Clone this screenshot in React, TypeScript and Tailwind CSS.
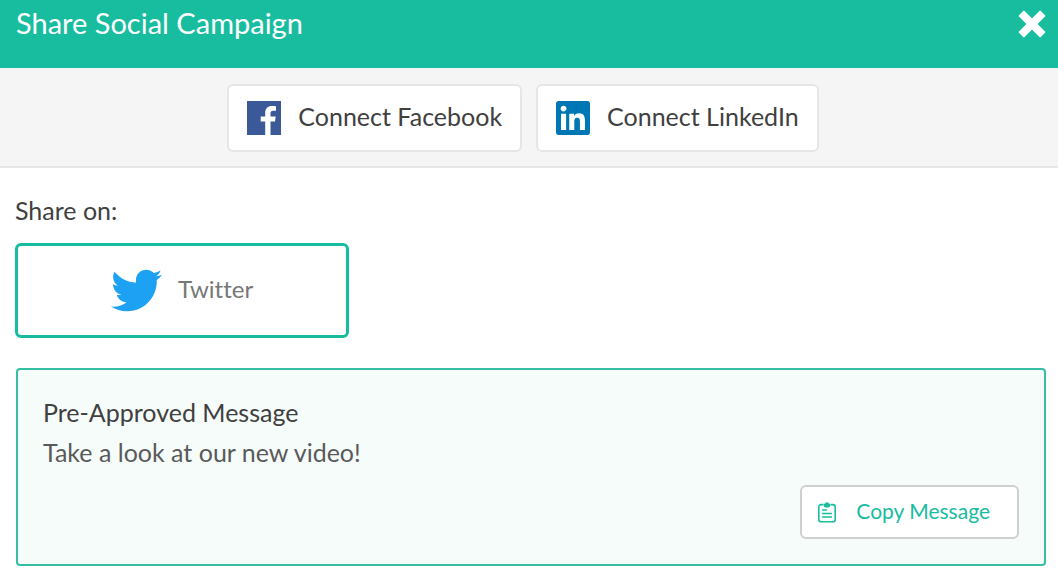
import type { ReactNode } from "react";
import { FaTwitter } from "react-icons/fa";

const MESSAGE = "Take a look at our new video!";

function CloseIcon() {
  return (
    <svg viewBox="0 0 28 28" className="size-7" fill="currentColor" aria-hidden="true">
      <rect x="-1.500" y="10" width="31" height="8" rx="1" transform="rotate(45 14 14)" />
      <rect x="-1.500" y="10" width="31" height="8" rx="1" transform="rotate(-45 14 14)" />
    </svg>
  );
}

function FacebookIcon() {
  return (
    <svg viewBox="0 0 34 34" className="size-[34px]" aria-hidden="true">
      <path fill="#3b5998" d="M0 0h34v34H0z" />
      <path
        fill="#fff"
        d="M18.200 34V20.600h-4.500v-5h4.500v-3.700c0-4.500 2.700-6.900 6.700-6.900 1.900 0 3.600.1 4.100.2v4.600h-2.800c-2.200 0-2.700 1-2.700 2.600v3.200h5.200l-.7 5h-4.500V34z"
      />
    </svg>
  );
}

function LinkedInIcon() {
  return (
    <svg viewBox="0 0 24 24" className="size-[34px]" fill="#0077b5" aria-hidden="true">
      <path d="M20.447 20.452h-3.554v-5.569c0-1.328-.027-3.037-1.852-3.037-1.853 0-2.136 1.445-2.136 2.939v5.667H9.351V9h3.414v1.561h.046c.477-.9 1.637-1.85 3.37-1.85 3.601 0 4.267 2.37 4.267 5.455v6.286zM5.337 7.433c-1.144 0-2.063-.926-2.063-2.065 0-1.138.92-2.063 2.063-2.063 1.14 0 2.064.925 2.064 2.063 0 1.139-.925 2.065-2.064 2.065zm1.782 13.019H3.555V9h3.564v11.452zM22.225 0H1.771C.792 0 0 .774 0 1.729v20.542C0 23.227.792 24 1.771 24h20.451C23.2 24 24 23.227 24 22.271V1.729C24 .774 23.2 0 22.222 0h.003z" />
    </svg>
  );
}

function ClipboardIcon() {
  return (
    <svg viewBox="0 0 18 21" className="h-[21px] w-[18px]" fill="none" stroke="currentColor" aria-hidden="true">
      <path
        strokeWidth="1.6"
        d="M5.500 2.600H3.200A2.400 2.400 0 0 0 .8 5v12.400a2.400 2.400 0 0 0 2.400 2.400h11.600a2.400 2.400 0 0 0 2.400-2.400V5a2.400 2.400 0 0 0-2.400-2.400h-2.300"
      />
      <path
        fill="currentColor"
        stroke="none"
        d="M5.700 1.700h1a2.500 2.500 0 0 1 4.600 0h1v1.500A2.200 2.200 0 0 1 10.100 5.400H7.900A2.200 2.200 0 0 1 5.700 3.200z"
      />
      <path strokeWidth="1.5" strokeLinecap="round" d="M4.500 8h4M4.500 11.500h9M4.500 15h9" />
    </svg>
  );
}

function ConnectButton({ icon, label }: { icon: ReactNode; label: string }) {
  return (
    <button
      type="button"
      className="flex items-center gap-[17px] rounded-md border-2 border-[#e6e6e6] bg-white px-[18px] py-[14px] text-[25px] leading-8 text-[#404040]"
    >
      {icon}
      <span className="pb-1">{label}</span>
    </button>
  );
}

export default function App() {
  return (
    <main className="min-h-screen bg-white font-['Lato',sans-serif] text-[#404040] [font-variant-ligatures:none]">
      <header className="flex items-start justify-between bg-[#18bc9f] pt-[7px] pr-3 pb-[29px] pl-4 text-white">
        <h1 className="text-[29px] leading-8">Share Social Campaign</h1>
        <button type="button" aria-label="Close" className="pt-[3px]">
          <CloseIcon />
        </button>
      </header>

      <div className="flex justify-center gap-[14px] border-b-2 border-[#e6e6e6] bg-[#f5f5f5] pt-4 pr-3 pb-[14px]">
        <ConnectButton icon={<FacebookIcon />} label="Connect Facebook" />
        <ConnectButton icon={<LinkedInIcon />} label="Connect LinkedIn" />
      </div>

      <section className="px-[15px] pt-[26px]">
        <h2 className="text-[25px] leading-8">Share on:</h2>
        <button
          type="button"
          aria-pressed="true"
          className="mt-[17px] flex h-[95px] w-[334px] items-center justify-center gap-4 rounded-md border-3 border-[#18bc9f] bg-white text-[24px] text-[#777]"
        >
          <FaTwitter className="size-[51px] text-[#1da1f2]" aria-hidden="true" />
          <span className="pb-1">Twitter</span>
        </button>
      </section>

      <section className="mt-[30px] mr-3 ml-4 rounded-sm border-2 border-[#36bfa2] bg-[#f6fcfa] px-[25px] pt-[26px] pb-[25px]">
        <h2 className="text-[25px] leading-8">Pre-Approved Message</h2>
        <p className="mt-2 text-[25px] leading-8 text-[#5a5a5a]">{MESSAGE}</p>
        <div className="mt-[17px] flex justify-end">
          <button
            type="button"
            onClick={() => navigator.clipboard?.writeText(MESSAGE)}
            className="flex items-center gap-5 rounded-md border-2 border-[#cfcfcf] bg-white py-[9px] pr-[27px] pl-4 text-[21px] leading-[30px] text-[#18bc9f]"
          >
            <ClipboardIcon />
            <span className="pb-[2px]">Copy Message</span>
          </button>
        </div>
      </section>
    </main>
  );
}
